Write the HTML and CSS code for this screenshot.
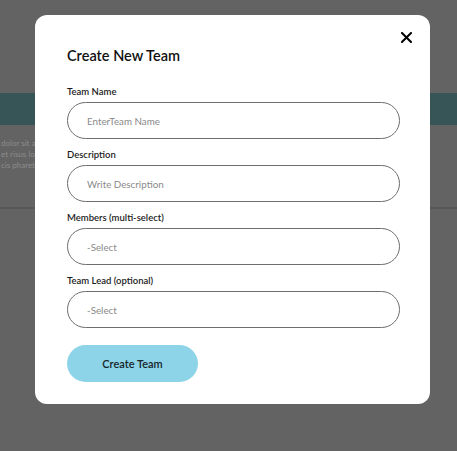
FILE: index.html
```html
<!DOCTYPE html>
<html>
<head>
<meta charset="utf-8">
<link rel="stylesheet" href="styles.css">
</head>
<body>
<div class="page">
  <div class="topbar"></div>
  <div class="teal"></div>
  <div class="copy">
    <p>dolor sit amet</p>
    <p>et risus lorem</p>
    <p>cis pharetra</p>
  </div>
</div>
<div class="overlay">
  <div class="modal">
    <button class="close" aria-label="Close">
      <svg width="11" height="11" viewBox="0 0 11 11"><path d="M1 1L10 10M10 1L1 10" stroke="#000" stroke-width="2" stroke-linecap="square"/></svg>
    </button>
    <h2 class="title">Create New Team</h2>
    <form class="form">
      <label class="field">
        <span class="label">Team Name</span>
        <input class="input" placeholder="EnterTeam Name">
      </label>
      <label class="field">
        <span class="label">Description</span>
        <input class="input" placeholder="Write Description">
      </label>
      <label class="field">
        <span class="label">Members (multi-select)</span>
        <input class="input" placeholder="-Select">
      </label>
      <label class="field">
        <span class="label">Team Lead (optional)</span>
        <input class="input" placeholder="-Select">
      </label>
      <button type="button" class="submit">Create Team</button>
    </form>
  </div>
</div>
</body>
</html>
```
FILE: styles.css
```css
* { box-sizing: border-box; }
html, body { margin: 0; padding: 0; }
body {
  background: #636363;
  font-family: Lato, "Noto Sans", sans-serif;
  width: 457px;
  height: 451px;
  overflow: hidden;
}
.page { width: 457px; }
.topbar { height: 93px; }
.teal { height: 32px; background: #375457; }
.copy {
  padding: 13px 0 0 1px;
  height: 84px;
  border-bottom: 2px solid #575757;
  color: #8c8c8c;
  font-size: 8px;
}
.copy p { margin: 0; line-height: 11px; }

.overlay {
  position: fixed;
  inset: 0;
  padding: 15px 27px 0 35px;
}
.modal {
  position: relative;
  width: 395px;
  height: 389px;
  background: #fff;
  border-radius: 12px;
  padding: 32px 30px 22px 32px;
}
.close {
  position: absolute;
  top: 17px;
  right: 18px;
  width: 11px;
  height: 11px;
  padding: 0;
  border: 0;
  background: none;
  display: flex;
}
.title {
  margin: 0;
  font-size: 14.5px;
  line-height: 18px;
  font-weight: 600;
  color: #111;
}
.form {
  margin-top: 21px;
  display: flex;
  flex-direction: column;
  gap: 10px;
}
.field { display: flex; flex-direction: column; gap: 4px; }
.label {
  font-size: 9.5px;
  line-height: 12px;
  font-weight: 600;
  color: #1c1c1c;
}
.input {
  width: 333px;
  height: 37px;
  border: 1px solid #6e6e6e;
  border-radius: 19px;
  padding: 0 0 0 19px;
  font-family: inherit;
  font-size: 9.8px;
  color: #333;
  outline: none;
  background: #fff;
}
.input::placeholder { color: #8a8a8a; }
.submit {
  margin-top: 7px;
  width: 131px;
  height: 37px;
  border: 0;
  border-radius: 19px;
  background: #8dd4e8;
  font-family: inherit;
  font-size: 11px;
  font-weight: 600;
  color: #16252b;
}
```
